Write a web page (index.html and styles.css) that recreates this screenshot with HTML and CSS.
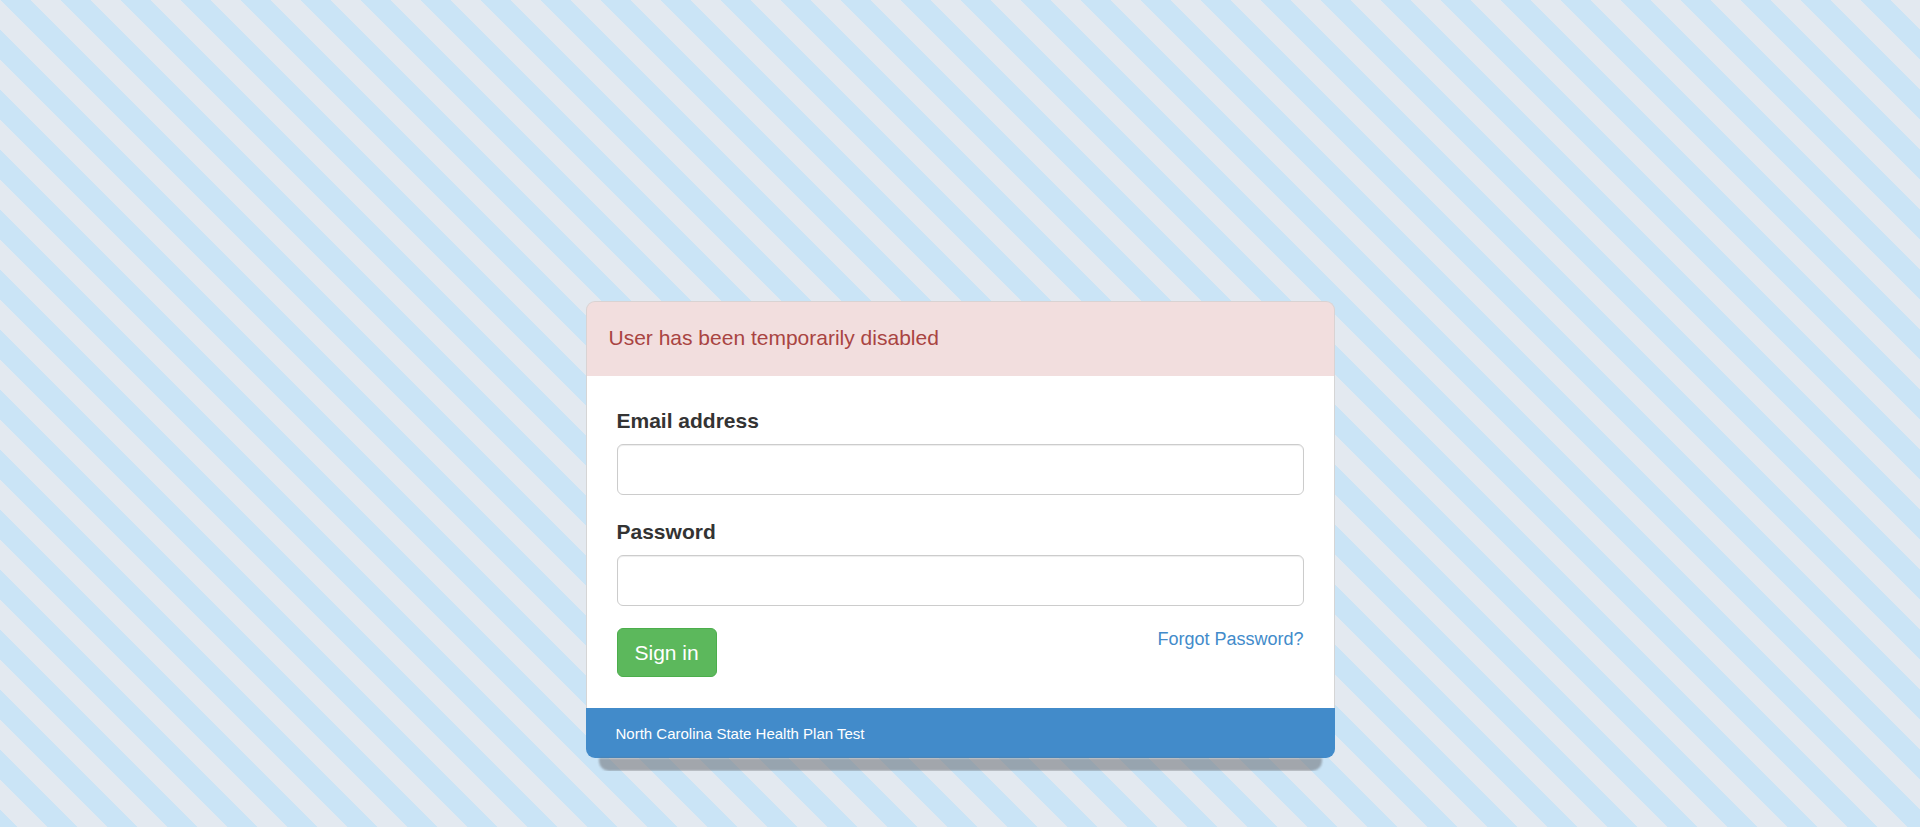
FILE: index.html
```html
<!DOCTYPE html>
<html lang="en">
<head>
<meta charset="utf-8">
<title>Sign in</title>
<link rel="stylesheet" href="styles.css">
</head>
<body>
<div class="page">
  <div class="card">
    <div class="alert">User has been temporarily disabled</div>
    <form class="card-body">
      <div class="form-group">
        <label class="label" for="email">Email address</label>
        <input class="input" id="email" type="text">
      </div>
      <div class="form-group">
        <label class="label" for="password">Password</label>
        <input class="input" id="password" type="password">
      </div>
      <div class="actions">
        <button class="btn" type="button">Sign in</button>
        <a class="forgot" href="#">Forgot Password?</a>
      </div>
    </form>
    <div class="card-footer">North Carolina State Health Plan Test</div>
  </div>
  <div class="card-shadow"></div>
</div>
</body>
</html>
```
FILE: styles.css
```css
html {
  height: 100%;
  background-color: #e3e9f0;
  background-image: repeating-linear-gradient(45deg, #cae4f6 0, #cae4f6 12.09px, #e3e9f0 12.09px, #e3e9f0 33.31px, #cae4f6 33.31px, #cae4f6 42.43px);
}
body {
  margin: 0;
  font-family: "Liberation Sans", Arial, sans-serif;
  color: #333;
}
.page {
  padding-top: 301px;
}
.card {
  width: 749px;
  margin: 0 auto;
  border-radius: 9px;
}
.card-shadow {
  width: 723px;
  height: 13px;
  margin: 0 auto;
  background: rgba(110, 112, 116, 0.55);
  border-radius: 0 0 10px 10px;
  filter: blur(0.8px);
}
.alert {
  background: #f2dede;
  color: #a94442;
  border: 1px solid #d9d3d3;
  border-bottom: none;
  border-radius: 9px 9px 0 0;
  padding: 21px 22px 23px;
  font-size: 21px;
  line-height: 30px;
}
.card-body {
  display: block;
  margin: 0;
  background: #fff;
  border-left: 1px solid #d5d5d5;
  border-right: 1px solid #d5d5d5;
  padding: 30px 30px 31px;
}
.form-group {
  margin-bottom: 22.5px;
}
.label {
  display: block;
  font-weight: bold;
  font-size: 21px;
  line-height: 30px;
  margin-bottom: 7.5px;
  color: #333;
}
.input {
  display: block;
  box-sizing: border-box;
  width: 100%;
  height: 51px;
  margin: 0;
  border: 1px solid #ccc;
  border-radius: 6px;
  background: #fff;
  box-shadow: inset 0 1px 1px rgba(0, 0, 0, 0.075);
  font-family: inherit;
  font-size: 21px;
  padding: 0 18px;
}
.actions {
  display: flex;
  justify-content: space-between;
  align-items: flex-start;
}
.btn {
  display: flex;
  align-items: center;
  justify-content: center;
  box-sizing: border-box;
  height: 49px;
  padding: 0 17px;
  background: #5cb85c;
  border: 1px solid #4cae4c;
  border-radius: 6px;
  color: #fff;
  font-family: inherit;
  font-size: 21px;
  line-height: 30px;
  cursor: pointer;
}
.forgot {
  color: #428bca;
  text-decoration: none;
  font-size: 18px;
  line-height: 22px;
}
.card-footer {
  background: #428bca;
  color: #fff;
  font-size: 15px;
  line-height: 21px;
  padding: 15px 30px 14px;
  border-radius: 0 0 9px 9px;
}
```
